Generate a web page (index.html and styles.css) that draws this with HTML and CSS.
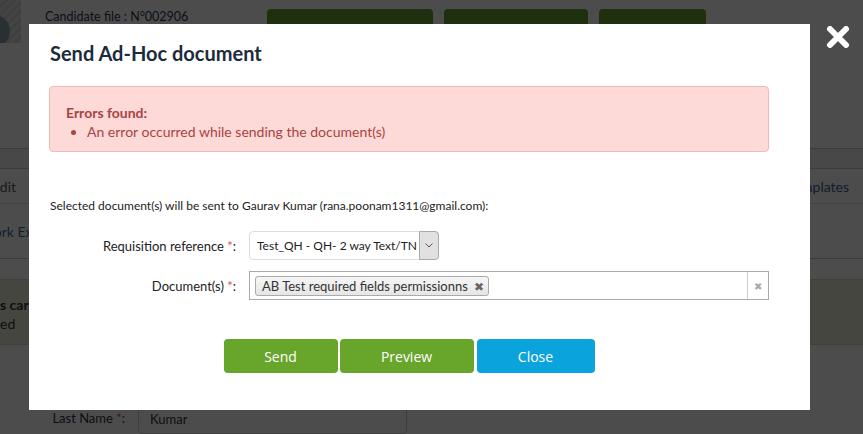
FILE: index.html
```html
<!DOCTYPE html>
<html lang="en">
<head>
  <meta charset="UTF-8" />
  <title>Candidate file</title>
  <link rel="stylesheet" href="styles.css">
</head>
<body>

  <!-- Page du candidat (sous l'overlay) -->
  <div class="page">
    <header class="cand-head">
      <div class="avatar"><div class="avatar-circle"></div></div>
      <div class="cand-title">Candidate file : N°002906</div>
      <div class="head-actions">
        <button class="bg-btn w1">Candidate timeline</button>
        <button class="bg-btn w2">Mark as reviewed</button>
        <button class="bg-btn w3">Add to pool</button>
      </div>
    </header>

    <div class="band"></div>

    <div class="tabs-row">
      <span class="tab-edit">Edit</span>
      <span class="tab-templates">Templates</span>
    </div>

    <div class="sub-row">
      <span class="link-work">Work Experience</span>
    </div>

    <div class="notice">
      <div class="notice-title">s carried over</div>
      <div class="notice-text">ed</div>
    </div>

    <div class="form-row">
      <label class="bg-label">Last Name <span class="req">*</span>:</label>
      <div class="bg-input">Kumar</div>
    </div>
  </div>

  <div class="overlay"></div>

  <!-- Fenêtre modale -->
  <div class="modal">
    <h2 class="modal-title">Send Ad-Hoc document</h2>

    <div class="alert">
      <div class="alert-title">Errors found:</div>
      <ul class="alert-list">
        <li>An error occurred while sending the document(s)</li>
      </ul>
    </div>

    <p class="recipient">Selected document(s) will be sent to Gaurav Kumar (rana.poonam1311@gmail.com):</p>

    <div class="field">
      <label class="field-label">Requisition reference <span class="req">*</span>:</label>
      <div class="select">
        <span class="select-text">Test_QH - QH- 2 way Text/TN</span>
        <span class="select-arrow">
          <svg width="8" height="5" viewBox="0 0 8 5"><path d="M0.5 0.5 L4 4 L7.5 0.5" fill="none" stroke="#555" stroke-width="1"/></svg>
        </span>
      </div>
    </div>

    <div class="field">
      <label class="field-label">Document(s) <span class="req">*</span>:</label>
      <div class="multi">
        <span class="tag">AB Test required fields permissionns <span class="tag-x">&#10006;</span></span>
        <span class="multi-clear">&#10006;</span>
      </div>
    </div>

    <div class="actions">
      <button class="btn btn-send">Send</button>
      <button class="btn btn-preview">Preview</button>
      <button class="btn btn-close">Close</button>
    </div>
  </div>

  <!-- Croix de fermeture -->
  <div class="modal-x">
    <svg width="24" height="22" viewBox="0 0 24 22">
      <path d="M4 3 L20 19 M20 3 L4 19" stroke="#fff" stroke-width="6" stroke-linecap="round"/>
    </svg>
  </div>

</body>
</html>
```

FILE: styles.css
```css
body {
  margin: 0;
  padding: 0;
  background: #fff;
  font-family: 'Lato', 'Open Sans', sans-serif;
  overflow: hidden;
  height: 434px;
}

/* ---- page de fond ---- */
.page {
  width: 863px;
}
.cand-head {
  display: flex;
  align-items: flex-start;
  height: 148px;
}
.avatar {
  width: 21px;
  height: 43px;
  background: repeating-linear-gradient(135deg, #e3e3e3 0 3px, #d2d2d2 3px 6px);
  overflow: hidden;
}
.avatar-circle {
  width: 26px;
  height: 30px;
  border-radius: 50%;
  background: #8aa0b0;
  margin: 16px 0 0 -16px;
}
.cand-title {
  margin: 9px 0 0 24px;
  font-size: 12.5px;
  color: #1f3b55;
  width: 200px;
}
.head-actions {
  display: flex;
  gap: 11px;
  margin: 9px 0 0 22px;
}
.bg-btn {
  height: 40px;
  border: none;
  border-radius: 4px;
  background: #69a032;
  color: #fff;
  font-family: 'Open Sans', sans-serif;
  font-size: 14px;
}
.w1 { width: 166px; }
.w2 { width: 144px; }
.w3 { width: 107px; }

.band {
  height: 19px;
  background: #f2f2f2;
  border-top: 1px solid #c5c5c5;
}
.tabs-row {
  height: 34px;
  border-top: 1px solid #c9c9c9;
  border-bottom: 1px solid #dcdcdc;
  display: flex;
  justify-content: space-between;
  align-items: center;
  font-size: 14px;
}
.tab-edit {
  margin-left: -8px;
  color: #555;
}
.tab-templates {
  margin-right: 14px;
  color: #37648c;
}
.sub-row {
  height: 54px;
  border-bottom: 1px solid #c5c5c5;
  font-size: 14px;
  color: #2e6da4;
  display: flex;
  align-items: center;
}
.link-work {
  margin-left: -20px;
}
.notice {
  margin-top: 20px;
  height: 66px;
  box-sizing: border-box;
  padding-top: 16px;
  background: #e7ebd8;
  border-top: 1px solid #d2d8b8;
  border-bottom: 1px solid #d2d8b8;
  font-size: 14px;
  color: #333;
}
.notice-title {
  font-weight: bold;
}
.notice-text {
  margin-top: 2px;
}
.form-row {
  display: flex;
  align-items: flex-start;
  margin-top: 59px;
}
.bg-label {
  width: 125px;
  text-align: right;
  font-size: 13px;
  color: #2b3440;
  padding-top: 6px;
  margin-right: 13px;
}
.bg-input {
  width: 269px;
  height: 30px;
  border: 1px solid #cfcfcf;
  border-radius: 4px;
  font-size: 13px;
  color: #333;
  padding: 6px 0 0 11px;
  box-sizing: border-box;
}

.overlay {
  position: fixed;
  top: 0;
  left: 0;
  right: 0;
  bottom: 0;
  background: rgba(0, 0, 0, 0.7);
}

/* ---- modale ---- */
.modal {
  position: fixed;
  top: 24px;
  left: 29px;
  width: 781px;
  height: 386px;
  box-sizing: border-box;
  padding: 17px 41px 0 20px;
  background: #fff;
}
.modal-title {
  margin: 0 0 0 1px;
  font-size: 20px;
  line-height: 24px;
  font-weight: bold;
  color: #1c2b3c;
}
.alert {
  margin-top: 21px;
  height: 66px;
  box-sizing: border-box;
  padding: 16px 16px 0 16px;
  background: #fdd9d7;
  border: 1px solid #efb8bd;
  border-radius: 4px;
  color: #a94442;
  font-size: 14px;
  line-height: 19px;
}
.alert-title {
  font-weight: bold;
}
.alert-list {
  margin: 0;
  padding-left: 21px;
}
.recipient {
  margin: 45px 0 0 1px;
  font-size: 12px;
  line-height: 17px;
  color: #222;
}
.field {
  display: flex;
  align-items: center;
  margin-top: 11px;
}
.recipient + .field {
  margin-top: 17px;
}
.field-label {
  width: 187px;
  text-align: right;
  margin-right: 13px;
  font-size: 13px;
  color: #222;
}
.req {
  color: #d9534f;
}
.select {
  width: 190px;
  height: 29px;
  box-sizing: border-box;
  border: 1px solid #ddd;
  border-radius: 4px;
  display: flex;
  align-items: center;
  justify-content: space-between;
  font-size: 12px;
  color: #222;
  white-space: nowrap;
}
.select-text {
  padding-left: 7px;
}
.select-arrow {
  flex-shrink: 0;
  width: 20px;
  height: 29px;
  box-sizing: border-box;
  margin-right: -1px;
  border: 1px solid #a9a9a9;
  border-radius: 0 4px 4px 0;
  background: #e1e1e1;
  display: flex;
  align-items: center;
  justify-content: center;
}
.multi {
  width: 520px;
  height: 29px;
  box-sizing: border-box;
  border: 1px solid #aaa;
  display: flex;
  align-items: center;
  justify-content: space-between;
}
.tag {
  margin-left: 5px;
  height: 20px;
  box-sizing: border-box;
  padding: 0 4px 0 6px;
  border: 1px solid #aaa;
  border-radius: 3px;
  background: linear-gradient(#f6f6f6, #e6e6e6);
  font-size: 13px;
  line-height: 18px;
  color: #333;
  white-space: nowrap;
}
.tag-x {
  font-size: 12px;
  color: #666;
  margin-left: 3px;
}
.multi-clear {
  width: 20px;
  height: 27px;
  border-left: 1px solid #ccc;
  font-size: 10px;
  color: #aaa;
  display: flex;
  align-items: center;
  justify-content: center;
}
.actions {
  display: flex;
  justify-content: center;
  gap: 2px;
  margin-top: 39px;
}
.btn {
  height: 34px;
  border: none;
  border-radius: 4px;
  color: #fff;
  font-family: 'Open Sans', sans-serif;
  font-size: 14px;
  cursor: pointer;
}
.btn-send { width: 114px; background: #67a52b; }
.btn-preview { width: 134px; background: #67a52b; }
.btn-close { width: 118px; background: #0ba3dc; margin-left: 1px; }

.modal-x {
  position: fixed;
  top: 26px;
  left: 826px;
  line-height: 0;
}
```
